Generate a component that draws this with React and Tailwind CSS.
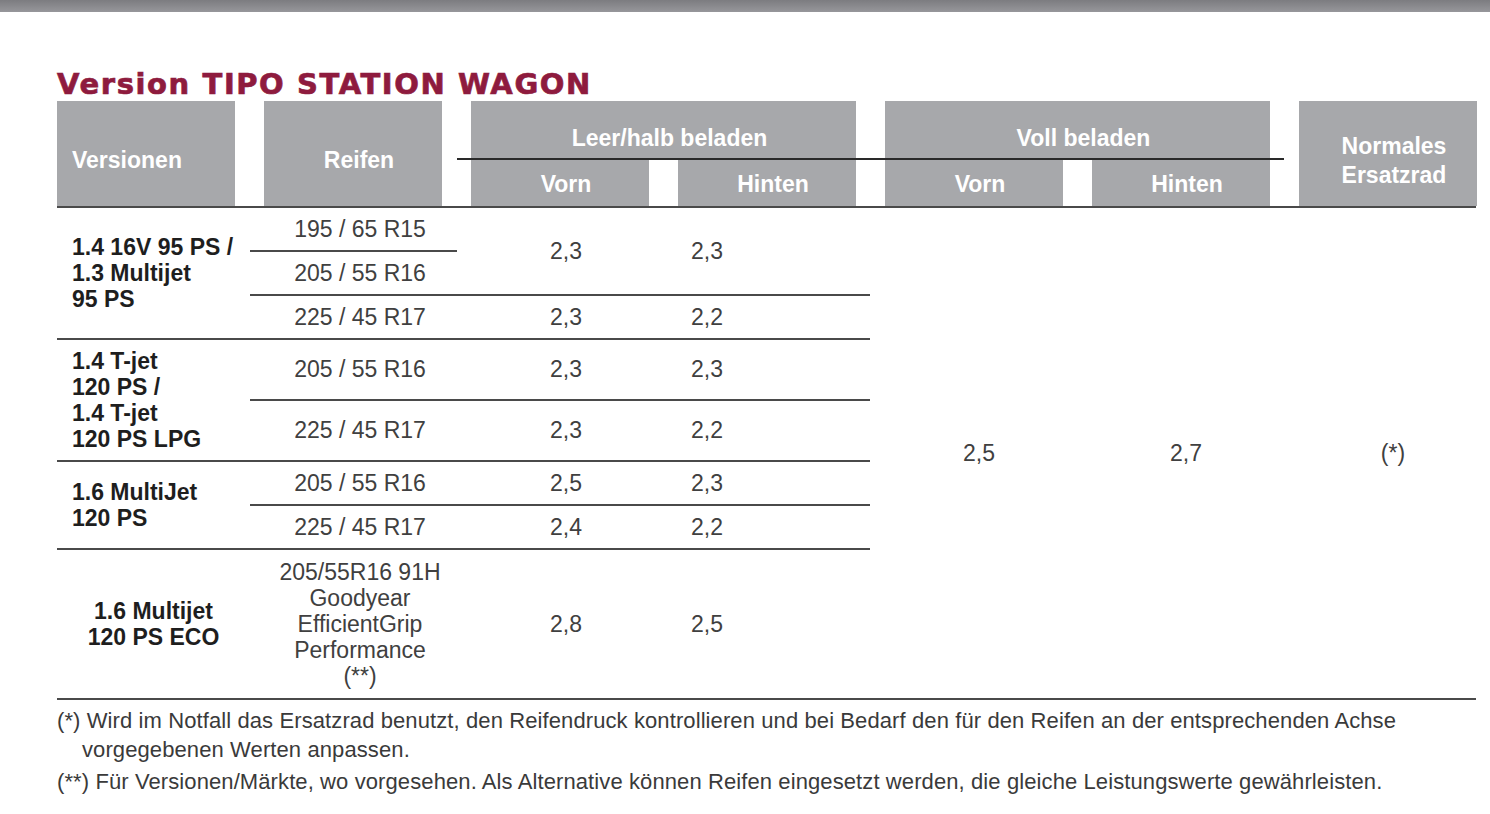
import React from "react";

const Line = ({ w }) => <div className={`h-[2px] bg-[#4a4a4a] ${w}`} />;

function Row({ tire, a, b }) {
  return (
    <div className="flex h-[42px] items-center">
      <div className="w-[220px] text-center">{tire}</div>
      <div className="w-[192px] text-center">{a}</div>
      <div className="w-[90px] text-center">{b}</div>
    </div>
  );
}

function VersionCell({ children, center }) {
  return (
    <div
      className={`w-[193px] flex items-center font-bold text-[23px] leading-[26px] text-[#1e1e1e] ${
        center ? "justify-center text-center" : "pl-[15px]"
      }`}
    >
      <div>{children}</div>
    </div>
  );
}

export default function App() {
  return (
    <div className="w-[1490px] h-[814px] bg-white font-['Liberation_Sans',Arial,sans-serif] overflow-hidden">
      <div className="h-[12px] bg-gradient-to-b from-[#7c7c80] to-[#97979b]" />
      <div className="pl-[57px]">
        <h1 className="mt-[55px] h-[34px] font-['DejaVu_Sans',sans-serif] font-bold text-[29px] leading-[34px] tracking-[1.6px] text-[#8e1b3e] [-webkit-text-stroke:0.7px_#8e1b3e]">
          Version TIPO STATION WAGON
        </h1>
        {/* header */}
        <div className="grid w-[1420px] grid-cols-[178px_178px_178px_178px_178px_178px_178px] grid-rows-[57px_2px_46px] gap-x-[29px] text-white font-bold text-[23px]">
          <div className="col-start-1 row-start-1 row-span-3 bg-[#a7a8ab] flex items-center pl-[15px] pt-[14px]">
            Versionen
          </div>
          <div className="col-start-2 row-start-1 row-span-3 bg-[#a7a8ab] flex items-center justify-center pl-[12px] pt-[14px]">
            Reifen
          </div>
          <div className="col-start-3 col-span-2 row-start-1 bg-[#a7a8ab] flex items-end justify-center pl-[12px] pb-[3px]">
            Leer/halb beladen
          </div>
          <div className="col-start-5 col-span-2 row-start-1 bg-[#a7a8ab] flex items-end justify-center pl-[12px] pb-[3px]">
            Voll beladen
          </div>
          <div className="col-start-3 col-span-4 row-start-2 -mx-[14px] bg-[#2a2a2a]" />
          <div className="col-start-3 row-start-3 bg-[#a7a8ab] flex items-center justify-center pl-[12px] pt-[2px]">Vorn</div>
          <div className="col-start-4 row-start-3 bg-[#a7a8ab] flex items-center justify-center pl-[12px] pt-[2px]">Hinten</div>
          <div className="col-start-5 row-start-3 bg-[#a7a8ab] flex items-center justify-center pl-[12px] pt-[2px]">Vorn</div>
          <div className="col-start-6 row-start-3 bg-[#a7a8ab] flex items-center justify-center pl-[12px] pt-[2px]">Hinten</div>
          <div className="col-start-7 row-start-1 row-span-3 bg-[#a7a8ab] flex items-center justify-center text-center leading-[29px] pl-[12px] pt-[14px]">
            <div>
              Normales
              <br />
              Ersatzrad
            </div>
          </div>
        </div>
        <Line w="w-[1419px]" />
        {/* body */}
        <div className="flex text-[23px] text-[#404040]">
          <div className="w-[813px] flex flex-col">
            {/* group 1 */}
            <div className="flex">
              <VersionCell>
                1.4 16V 95 PS /
                <br />
                1.3 Multijet
                <br />
                95 PS
              </VersionCell>
              <div className="w-[620px] flex flex-col">
                <div className="flex h-[86px]">
                  <div className="w-[220px] flex flex-col">
                    <div className="h-[42px] flex items-center justify-center">195 / 65 R15</div>
                    <Line w="w-[207px]" />
                    <div className="h-[42px] flex items-center justify-center">205 / 55 R16</div>
                  </div>
                  <div className="w-[192px] flex items-center justify-center">2,3</div>
                  <div className="w-[90px] flex items-center justify-center">2,3</div>
                </div>
                <Line w="w-[620px]" />
                <Row tire="225 / 45 R17" a="2,3" b="2,2" />
              </div>
            </div>
            <Line w="w-[813px]" />
            {/* group 2 */}
            <div className="flex">
              <VersionCell>
                1.4 T-jet
                <br />
                120 PS /
                <br />
                1.4 T-jet
                <br />
                120 PS LPG
              </VersionCell>
              <div className="w-[620px] flex flex-col">
                <div className="flex h-[59px] items-center">
                  <div className="w-[220px] text-center">205 / 55 R16</div>
                  <div className="w-[192px] text-center">2,3</div>
                  <div className="w-[90px] text-center">2,3</div>
                </div>
                <Line w="w-[620px]" />
                <div className="flex h-[59px] items-center">
                  <div className="w-[220px] text-center">225 / 45 R17</div>
                  <div className="w-[192px] text-center">2,3</div>
                  <div className="w-[90px] text-center">2,2</div>
                </div>
              </div>
            </div>
            <Line w="w-[813px]" />
            {/* group 3 */}
            <div className="flex">
              <VersionCell>
                1.6 MultiJet
                <br />
                120 PS
              </VersionCell>
              <div className="w-[620px] flex flex-col">
                <Row tire="205 / 55 R16" a="2,5" b="2,3" />
                <Line w="w-[620px]" />
                <Row tire="225 / 45 R17" a="2,4" b="2,2" />
              </div>
            </div>
            <Line w="w-[813px]" />
            {/* group 4 */}
            <div className="flex h-[148px]">
              <VersionCell center>
                1.6 Multijet
                <br />
                120 PS ECO
              </VersionCell>
              <div className="w-[620px] flex items-center">
                <div className="w-[220px] text-center leading-[26px]">
                  205/55R16 91H
                  <br />
                  Goodyear
                  <br />
                  EfficientGrip
                  <br />
                  Performance
                  <br />
                  (**)
                </div>
                <div className="w-[192px] text-center">2,8</div>
                <div className="w-[90px] text-center">2,5</div>
              </div>
            </div>
          </div>
          <div className="flex pl-[20px] gap-x-[29px]">
            <div className="w-[178px] flex items-center justify-center">2,5</div>
            <div className="w-[178px] flex items-center justify-center">2,7</div>
            <div className="w-[178px] flex items-center justify-center">(*)</div>
          </div>
        </div>
        <Line w="w-[1419px]" />
        {/* footnotes */}
        <div className="text-[22px] leading-[29px] tracking-[0.1px] text-[#3a3a3a] mt-[6px]">
          <p className="pl-[25px] -indent-[25px]">
            (*) Wird im Notfall das Ersatzrad benutzt, den Reifendruck kontrollieren und bei Bedarf den für den Reifen an der entsprechenden Achse
            <br />
            vorgegebenen Werten anpassen.
          </p>
          <p className="mt-[3px]">
            (**) Für Versionen/Märkte, wo vorgesehen. Als Alternative können Reifen eingesetzt werden, die gleiche Leistungswerte gewährleisten.
          </p>
        </div>
      </div>
    </div>
  );
}
